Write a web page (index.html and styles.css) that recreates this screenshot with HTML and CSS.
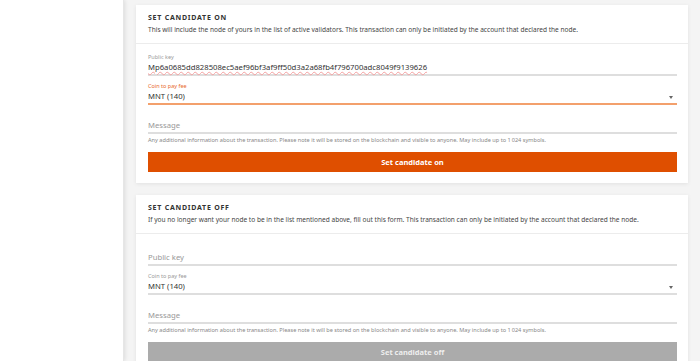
FILE: index.html
```html
<!DOCTYPE html>
<html lang="en">
<head>
    <meta charset="UTF-8">
    <meta name="viewport" content="width=device-width, initial-scale=1.0">
    <title>Candidate</title>
    <link rel="stylesheet" href="styles.css">
</head>
<body>
    <div class="layout">
        <!-- left menu (empty in this view) -->
        <aside class="sidebar"></aside>

        <main class="main">
            <!-- set candidate on -->
            <section class="card">
                <div class="card-head">
                    <h2 class="card-title">SET CANDIDATE ON</h2>
                    <p class="card-desc">This will include the node of yours in the list of active validators. This transaction can only be initiated by the account that declared the node.</p>
                </div>
                <form class="card-body">
                    <div class="field">
                        <label class="field-label">Public key</label>
                        <div class="field-value key">Mp6a0685dd828508ec5aef96bf3af9ff50d3a2a68fb4f796700adc8049f9139626</div>
                    </div>
                    <div class="field field-active">
                        <label class="field-label">Coin to pay fee</label>
                        <div class="field-value select">MNT (140)</div>
                    </div>
                    <div class="field">
                        <label class="field-label"></label>
                        <div class="field-value placeholder">Message</div>
                    </div>
                    <p class="hint">Any additional information about the transaction. Please note it will be stored on the blockchain and visible to anyone. May include up to 1&#8239;024 symbols.</p>
                    <button type="button" class="btn">Set candidate on</button>
                </form>
            </section>

            <!-- set candidate off -->
            <section class="card">
                <div class="card-head">
                    <h2 class="card-title">SET CANDIDATE OFF</h2>
                    <p class="card-desc">If you no longer want your node to be in the list mentioned above, fill out this form. This transaction can only be initiated by the account that declared the node.</p>
                </div>
                <form class="card-body">
                    <div class="field">
                        <label class="field-label"></label>
                        <div class="field-value placeholder">Public key</div>
                    </div>
                    <div class="field">
                        <label class="field-label">Coin to pay fee</label>
                        <div class="field-value select">MNT (140)</div>
                    </div>
                    <div class="field">
                        <label class="field-label"></label>
                        <div class="field-value placeholder">Message</div>
                    </div>
                    <p class="hint">Any additional information about the transaction. Please note it will be stored on the blockchain and visible to anyone. May include up to 1&#8239;024 symbols.</p>
                    <button type="button" class="btn btn-disabled">Set candidate off</button>
                </form>
            </section>
        </main>
    </div>
</body>
</html>
```

FILE: styles.css
```css
body {
    margin: 0;
    background: #f4f4f4;
    font-family: "Noto Sans", "Open Sans", sans-serif;
    color: #333;
    height: 361px;
    overflow: hidden;
}

.layout {
    display: flex;
    height: 100%;
}

/* 왼쪽 메뉴 */
.sidebar {
    width: 123px;
    flex-shrink: 0;
    background: #fff;
    border-right: 1px solid #e6e6e6;
    box-shadow: 1px 0 4px rgba(0, 0, 0, 0.1);
}

.main {
    flex: 1;
    display: flex;
    flex-direction: column;
    gap: 12px;
    padding: 5px 12px 0 12px;
}

/* 카드 */
.card {
    background: #fff;
    box-shadow: 0 1px 4px rgba(0, 0, 0, 0.08);
}

.card-head {
    padding: 8px 12px 8px;
    border-bottom: 1px solid #ececec;
}

.card-title {
    margin: 0 0 2px;
    font-size: 7px;
    line-height: 9px;
    letter-spacing: 0.75px;
    font-weight: 700;
    color: #333;
}

.card-desc {
    margin: 0;
    font-size: 6.55px;
    line-height: 11px;
    color: #444;
}

.card-body {
    padding: 9px 11px 11px 12px;
    display: flex;
    flex-direction: column;
}

/* 입력 필드 */
.field {
    display: flex;
    flex-direction: column;
    margin-bottom: 6px;
}

.field-label {
    height: 8px;
    font-size: 5.5px;
    line-height: 8px;
    color: #999;
}

.field-value {
    height: 13px;
    font-size: 7.7px;
    line-height: 13px;
    color: #333;
    border-bottom: 2px solid #dedede;
    position: relative;
}

.field-active .field-label {
    color: #e8692c;
}

.field-active .field-value {
    border-bottom-color: #f3a06c;
}

.key {
    text-decoration: underline wavy #f4a0a0;
    text-decoration-thickness: 0.5px;
    text-underline-offset: 1px;
}

.placeholder {
    color: #999;
}

/* 드롭다운 화살표 */
.select::after {
    content: "";
    position: absolute;
    right: 4px;
    top: 6px;
    border-left: 2.5px solid transparent;
    border-right: 2.5px solid transparent;
    border-top: 3px solid #666;
}

.hint {
    margin: -4px 0 8px;
    font-size: 5.6px;
    line-height: 8px;
    color: #888;
}

.btn {
    height: 20px;
    border: none;
    background: #df4f00;
    color: #fff;
    font-family: "Noto Sans", "Open Sans", sans-serif;
    font-size: 7.5px;
    font-weight: 700;
    cursor: pointer;
}

.btn-disabled {
    background: #ababab;
    color: #eee;
    cursor: default;
}
```
